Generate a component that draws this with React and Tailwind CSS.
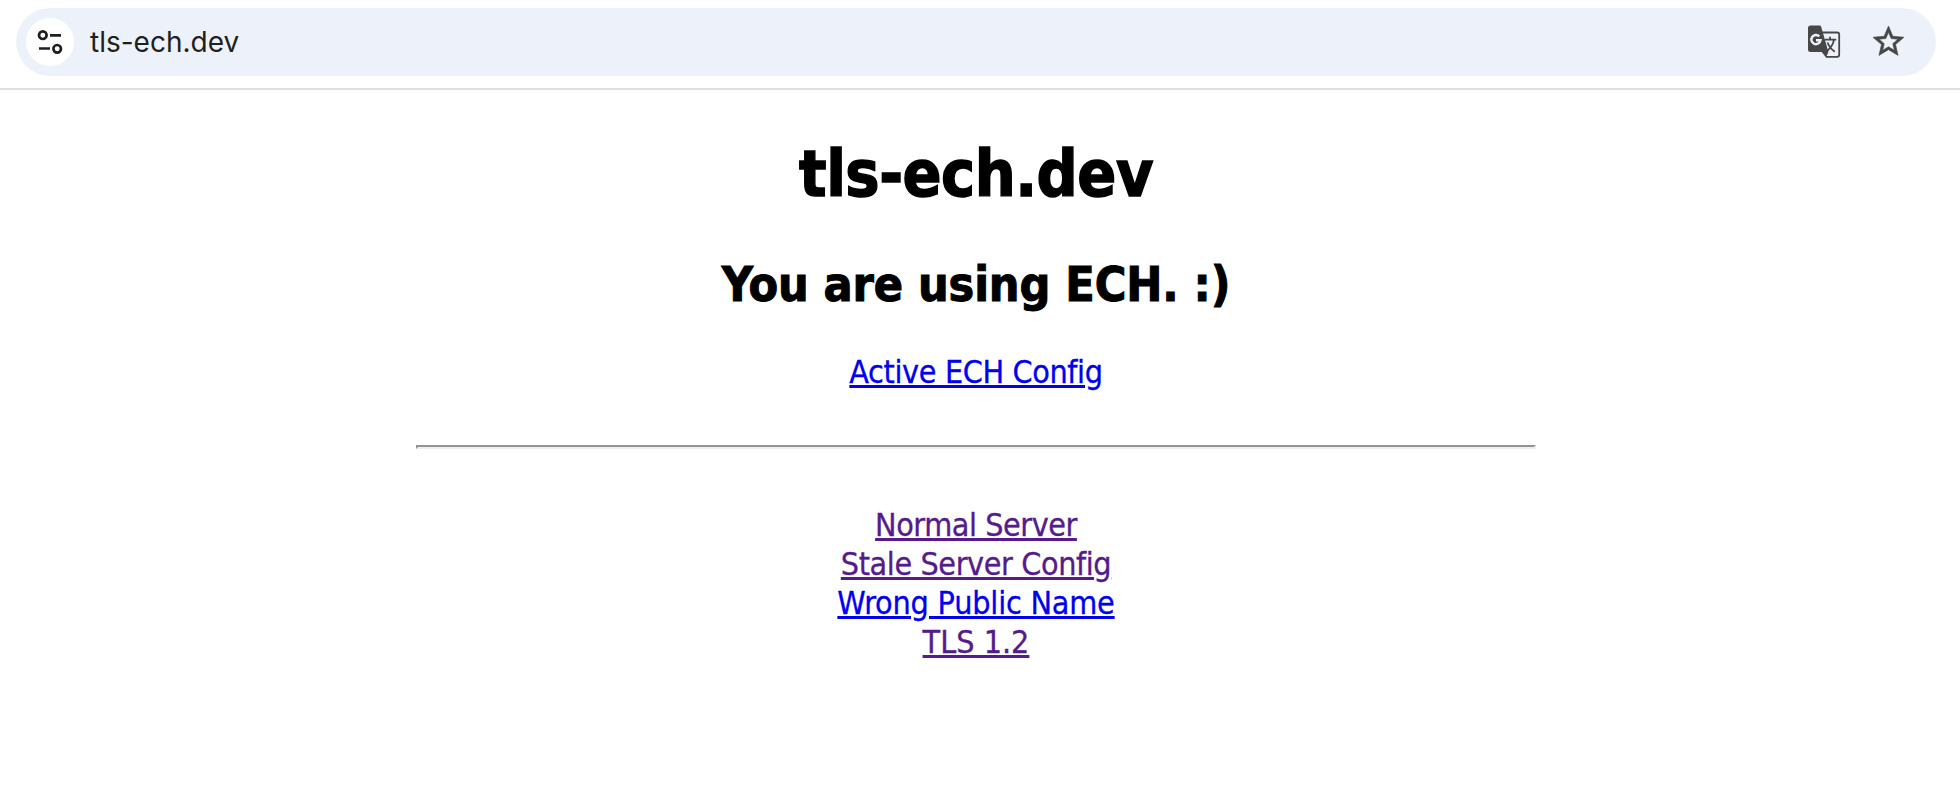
import React from "react";

const LINKS = [
  { label: "Normal Server", visited: true, spacing: "tracking-[-0.45px]" },
  { label: "Stale Server Config", visited: true, spacing: "tracking-[-0.4px]" },
  { label: "Wrong Public Name", visited: false, spacing: "tracking-[-0.2px]" },
  { label: "TLS 1.2", visited: true, spacing: "tracking-[0px]" },
];

function TuneIcon() {
  return (
    <svg width="26" height="26" viewBox="0 0 26 26" fill="none" stroke="#1f1f1f" strokeWidth="2.7">
      <circle cx="5.8" cy="6.2" r="3.8" />
      <path d="M13 6.4h11M2 19.5h11" />
      <circle cx="20.2" cy="19.8" r="3.8" />
    </svg>
  );
}

function TranslateIcon() {
  return (
    <svg width="34" height="34" viewBox="0 0 34 34" fill="none">
      <path d="M14 7.5h15.2a2 2 0 0 1 2 2v20.3a2 2 0 0 1-2 2H18" stroke="#474747" strokeWidth="1.8" />
      <path d="M2.5.5h9.2a1.500 1.500 0 0 1 1.400 1l7.300 25.500-2.400 5.500L13.700 27H2.500A2.500 2.500 0 0 1 0 24.500V3A2.500 2.500 0 0 1 2.500.5Z" fill="#474747" />
      <path d="M11.300 11.400A4.600 4.600 0 1 0 12.500 15.300H8" stroke="#edf2fa" strokeWidth="2.400" />
      <path
        d="M16.700 14.600h11.500M22 11.700v3M26 14.600c-.8 4.800-4 9-7.200 11.600M19.500 17.500c1.400 3.600 4 7 7.300 9.300"
        stroke="#474747"
        strokeWidth="1.800"
      />
    </svg>
  );
}

function StarIcon() {
  return (
    <svg
      className="overflow-visible"
      width="31"
      height="32.5"
      viewBox="2 2 20 21"
      fill="#474747"
      stroke="#474747"
      strokeWidth="0.4"
    >
      <path d="M22 9.240l-7.190-.62L12 2 9.190 8.630 2 9.240l5.460 4.730L5.820 21 12 17.270 18.180 21l-1.630-7.030L22 9.240zM12 15.400l-3.760 2.270 1-4.280-3.320-2.880 4.380-.38L12 6.100l1.710 4.040 4.380.38-3.320 2.880 1 4.280L12 15.400z" />
    </svg>
  );
}

export default function App() {
  return (
    <div className="h-[794px] w-full overflow-hidden bg-white text-black">
      <header className="h-[90px] border-b-2 border-[#e0e0e0] pl-4 pr-6 pt-2">
        <div className="flex h-[68px] items-center rounded-full bg-[#edf2fa] pl-2.5 pr-8">
          <div className="flex size-12 items-center justify-center rounded-full bg-white">
            <TuneIcon />
          </div>
          <span className="ml-4 flex-1 font-['Inter',sans-serif] text-[28px] leading-none text-[#1f1f1f]">
            tls-ech.dev
          </span>
          <TranslateIcon />
          <div className="ml-[31px]">
            <StarIcon />
          </div>
        </div>
      </header>

      <main className="ml-[416px] w-[1120px] pt-[46px] text-center font-['DejaVu_Sans_Condensed','DejaVu_Sans',sans-serif] text-[32px] leading-[39px]">
        <h1 className="text-[64px] font-bold leading-[77px] tracking-[-0.5px] [-webkit-text-stroke:1.4px_black]">
          tls-ech.dev
        </h1>
        <h2 className="mt-[42px] text-[48px] font-bold leading-[58px] tracking-[-0.1px] [-webkit-text-stroke:1px_black]">
          You are using ECH. :)
        </h2>
        <p className="mt-10">
          <a
            href="#"
            className="tracking-[-0.37px] text-[#0000ee] underline decoration-[3px] underline-offset-[2px] [-webkit-text-stroke:0.3px]"
          >
            Active ECH Config
          </a>
        </p>
        <hr className="mt-[53px] h-1 border-2 border-[#949494] border-b-[#eeeeee] border-r-[#eeeeee]" />
        <ul className="mt-[57px]">
          {LINKS.map((l) => (
            <li key={l.label}>
              <a
                href="#"
                className={`underline decoration-[3px] underline-offset-[2px] [-webkit-text-stroke:0.3px] ${l.spacing} ${
                  l.visited ? "text-[#551a8b]" : "text-[#0000ee]"
                }`}
              >
                {l.label}
              </a>
            </li>
          ))}
        </ul>
      </main>
    </div>
  );
}
